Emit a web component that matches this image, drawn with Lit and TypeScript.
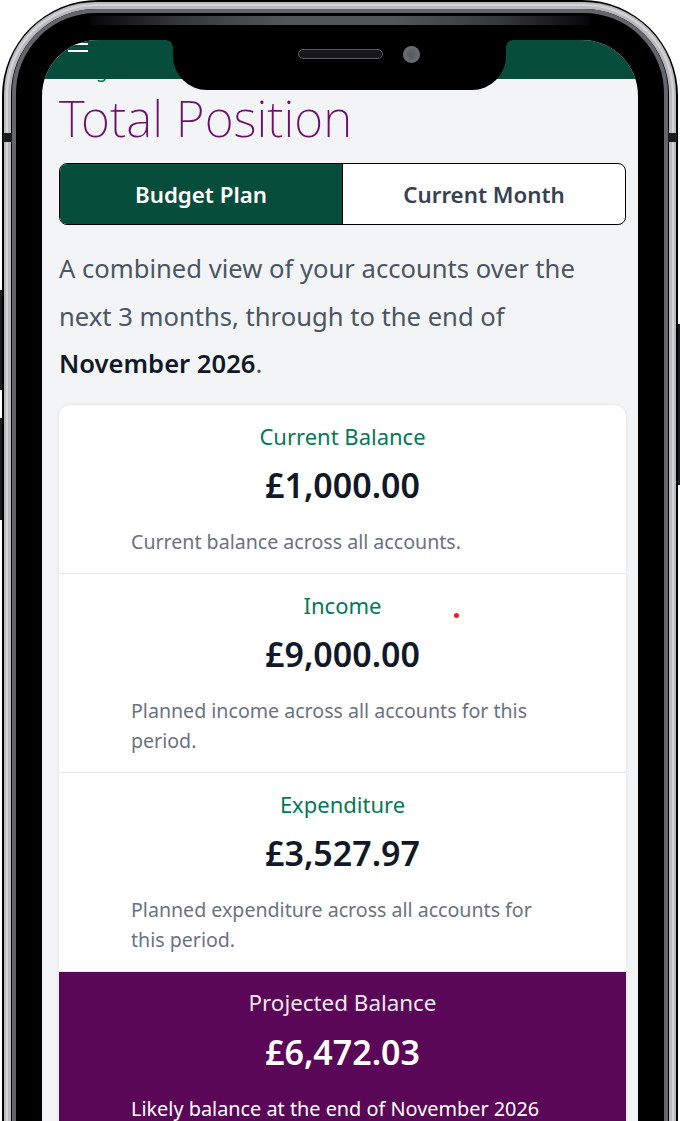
import { LitElement, html, css } from "lit";
import { customElement } from "lit/decorators.js";

interface Row { label: string; value: string; desc: string; featured?: boolean; }
const rows: Row[] = [
  { label: "Current Balance", value: "£1,000.00", desc: "Current balance across all accounts." },
  { label: "Income", value: "£9,000.00", desc: "Planned income across all accounts for this period." },
  { label: "Expenditure", value: "£3,527.97", desc: "Planned expenditure across all accounts for this period." },
  { label: "Projected Balance", value: "£6,472.03", desc: "Likely balance at the end of November 2026", featured: true },
];

@customElement("app-root")
export class AppRoot extends LitElement {
  static styles = css`
    :host { display: block; width: 680px; height: 1121px; overflow: hidden; position: relative; background: #fff;
      font-family: "Noto Sans", sans-serif; }
    * { box-sizing: border-box; }
    .btn { position: absolute; background: #1c1c1e; width: 3px; }
    .btn.l1 { left: 0; top: 290px; height: 100px; }
    .btn.l2 { left: 0; top: 418px; height: 102px; }
    .btn.r1 { right: 0; top: 324px; height: 161px; }
    .phone { position: absolute; left: 2px; top: 0; width: 676px; height: 1400px; border-radius: 96px; background: #000; }
    .silver { position: absolute; left: 4px; right: 4px; top: 2px; height: 1400px; border-radius: 92px; border: 7px solid #b8babe; }
    .silver::after { content: ""; position: absolute; inset: -5px; border-radius: 90px; border: 2px solid #d4d5d8; }
    .gray { position: absolute; left: 12px; right: 12px; top: 9px; height: 1400px; border-radius: 84px; border: 4px solid #63666a; }
    .gloss { position: absolute; left: 90px; right: 90px; top: 16px; height: 9px;
      background: linear-gradient(90deg, #050607 0%, #35383b 18%, #54575a 40%, #54575a 60%, #35383b 82%, #050607 100%); }
    .band { position: absolute; top: 133px; height: 9px; width: 9px; background: #1b1b1d; }
    .band.a { left: 3px; } .band.b { right: 3px; }
    .screen { position: absolute; left: 42px; top: 40px; width: 596px; height: 1300px; border-radius: 56px 56px 0 0;
      background: #f3f4f6; overflow: hidden; }
    .top { height: 39px; background: #064e3b; position: relative; }
    .burger { position: absolute; left: 26px; top: 3px; width: 20px; display: flex; flex-direction: column; gap: 5px; }
    .burger i { display: block; height: 2px; background: #fff; }
    .crumb { height: 4px; overflow: hidden; padding-left: 18px; }
    .crumb span { display: block; margin-top: -22px; font-size: 19px; line-height: 26px; color: #047857; }
    main { padding: 0 12px 0 17px; }
    h1 { margin: -1px 0 0; font-weight: 250; font-size: 49.7px; line-height: 72px; color: #6b0f6e; height: 81px; }
    .tabs { display: flex; height: 62px; border: 1px solid #000; border-radius: 8px; overflow: hidden; background: #fff; }
    .tab { flex: 1; display: flex; align-items: center; justify-content: center; font-size: 22.3px; font-weight: 600; color: #374151; }
    .tab.on { background: #064e3b; color: #fff; border-right: 1px solid #000; }
    p.intro { margin: 20px 0 17.5px; font-size: 25.6px; line-height: 47.5px; color: #4b5563; }
    p.intro b { font-weight: 600; color: #111827; }
    .card { background: #fff; border-radius: 12px 12px 0 0; box-shadow: 0 0 4px rgba(0,0,0,.08); }
    .row { padding: 16px 72px; text-align: center; border-bottom: 1px solid #e5e7eb; }
    .row.feat { background: #5b0758; border-bottom: 0; }
    .lab { font-size: 22px; line-height: 30px; color: #047857; }
    .val { font-size: 34px; font-weight: 600; line-height: 50px; color: #111827; margin-top: 9px; }
    .desc { font-size: 19.6px; line-height: 30px; color: #6b7280; text-align: left; margin-top: 17px; }
    .feat .lab { color: #f0e6ef; font-size: 22.4px; }
    .feat .val { color: #fff; }
    .feat .desc { color: #fff; white-space: nowrap; font-size: 19.85px; }
    .notch { position: absolute; left: 173px; top: 25px; width: 333px; height: 65px; background: #000; border-radius: 0 0 34px 34px; }
    .notch::before, .notch::after { content: ""; position: absolute; top: 15px; width: 7px; height: 7px; }
    .notch::before { left: -7px; background: radial-gradient(circle at 0 100%, transparent 6.5px, #000 7px); }
    .notch::after { right: -7px; background: radial-gradient(circle at 100% 100%, transparent 6.5px, #000 7px); }
    .speaker { position: absolute; left: 125px; top: 24px; width: 85px; height: 10px; border-radius: 5px; background: #17181a; border: 1px solid #55585c; }
    .cam { position: absolute; left: 230px; top: 21px; width: 17px; height: 17px; border-radius: 50%; background: radial-gradient(circle, #585b5f 15%, #797c80 100%); }
    .dot { position: absolute; left: 454px; top: 613px; width: 5px; height: 5px; border-radius: 50%; background: #ee1c25; }
  `;
  render() {
    return html`
      <div class="btn l1"></div><div class="btn l2"></div><div class="btn r1"></div>
      <div class="phone"></div>
      <div class="silver"></div>
      <div class="gray"></div>
      <div class="gloss"></div>
      <div class="band a"></div><div class="band b"></div>
      <div class="screen">
        <div class="top"><div class="burger"><i></i><i></i></div></div>
        <div class="crumb"><span>Budget Plan</span></div>
        <main>
          <h1>Total Position</h1>
          <div class="tabs"><div class="tab on">Budget Plan</div><div class="tab">Current Month</div></div>
          <p class="intro">A combined view of your accounts over the next 3 months, through to the end of <b>November 2026</b>.</p>
          <div class="card">
            ${rows.map(r => html`<div class="row ${r.featured ? "feat" : ""}">
              <div class="lab">${r.label}</div><div class="val">${r.value}</div><div class="desc">${r.desc}</div>
            </div>`)}
          </div>
        </main>
      </div>
      <div class="notch"><div class="speaker"></div><div class="cam"></div></div>
      <div class="dot"></div>
    `;
  }
}
